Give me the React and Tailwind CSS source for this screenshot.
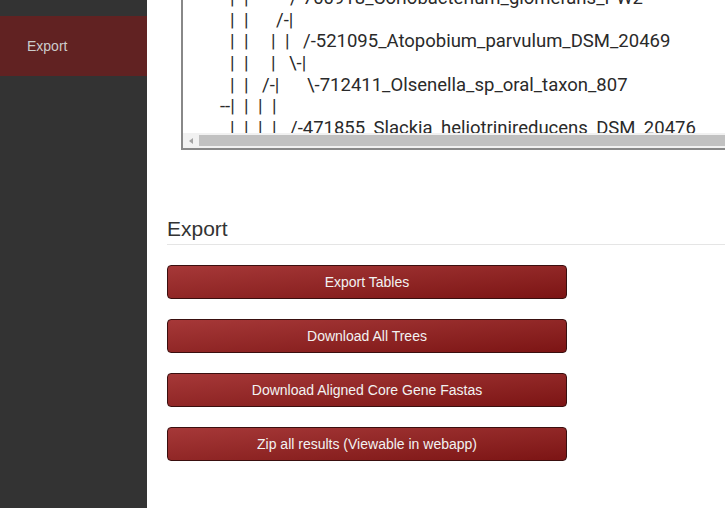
import React from "react";

function Line({ children, ml }) {
  return <div className={"flex whitespace-pre h-[21.7px] leading-[21.7px] " + ml}>{children}</div>;
}

const buttons = [
  "Export Tables",
  "Download All Trees",
  "Download Aligned Core Gene Fastas",
  "Zip all results (Viewable in webapp)",
];

export default function App() {
  return (
    <div className="flex h-[508px] w-[725px] overflow-hidden bg-white font-['Liberation_Sans',Arial,sans-serif]">
      <aside className="w-[147px] shrink-0 bg-[#333333]">
        <div className="mt-[16px] flex h-[60px] items-center bg-[#612222] pl-[27px] text-[14px] text-[#cccccc]">
          Export
        </div>
      </aside>
      <main className="flex min-w-0 flex-1 flex-col overflow-hidden pl-[20px]">
        <div className="-mt-[20px] ml-[14px] w-[600px] shrink-0 border-2 border-[#888888] bg-white">
          <div className="h-[151px] overflow-hidden pt-[6px] font-['Roboto',sans-serif] text-[18.5px] text-[#2a2a2a]">
            <Line ml="ml-[47px]">
              <span className="w-[14px] shrink-0">|</span>
              <span className="w-[46px] shrink-0">|</span>
              <span>/-700918_Coriobacterium_glomerans_PW2</span>
            </Line>
            <Line ml="ml-[47px]">
              <span className="w-[14px] shrink-0">|</span>
              <span className="w-[32px] shrink-0">|</span>
              <span>/-|</span>
            </Line>
            <Line ml="ml-[47px]">
              <span className="w-[14px] shrink-0">|</span>
              <span className="w-[27px] shrink-0">|</span>
              <span className="w-[14px] shrink-0">|</span>
              <span className="w-[18px] shrink-0">|</span>
              <span>/-521095_Atopobium_parvulum_DSM_20469</span>
            </Line>
            <Line ml="ml-[47px]">
              <span className="w-[14px] shrink-0">|</span>
              <span className="w-[27px] shrink-0">|</span>
              <span className="w-[18px] shrink-0">|</span>
              <span>{"\\-|"}</span>
            </Line>
            <Line ml="ml-[47px]">
              <span className="w-[14px] shrink-0">|</span>
              <span className="w-[18px] shrink-0">|</span>
              <span className="w-[45px] shrink-0">/-|</span>
              <span>{"\\-712411_Olsenella_sp_oral_taxon_807"}</span>
            </Line>
            <Line ml="ml-[37px]">
              <span className="w-[24px] shrink-0">--|</span>
              <span className="w-[14px] shrink-0">|</span>
              <span className="w-[14px] shrink-0">|</span>
              <span>|</span>
            </Line>
            <Line ml="ml-[47px]">
              <span className="w-[14px] shrink-0">|</span>
              <span className="w-[14px] shrink-0">|</span>
              <span className="w-[14px] shrink-0">|</span>
              <span className="w-[18px] shrink-0">|</span>
              <span>/-471855_Slackia_heliotrinireducens_DSM_20476</span>
            </Line>
          </div>
          <div className="flex h-[15px] items-center bg-[#f1f1f1]">
            <div className="ml-[6px] h-0 w-0 border-y-[3.5px] border-r-[4px] border-y-transparent border-r-[#a3a3a3]" />
            <div className="ml-[6px] h-[11px] flex-1 bg-[#c1c1c1]" />
          </div>
        </div>

        <div className="mt-[67px] border-b border-[#e5e5e5] pb-[4px] text-[21px] leading-[23px] text-[#333333]">
          Export
        </div>

        <div className="mt-[20px] flex flex-col gap-[20px]">
          {buttons.map((b) => (
            <button
              key={b}
              className="flex h-[34px] w-[400px] items-center justify-center rounded-[4px] border border-[#3a0f0f] bg-linear-to-br from-[#a63838] to-[#7c1414] text-[14px] text-[#f2f2f2]"
            >
              {b}
            </button>
          ))}
        </div>
      </main>
    </div>
  );
}
